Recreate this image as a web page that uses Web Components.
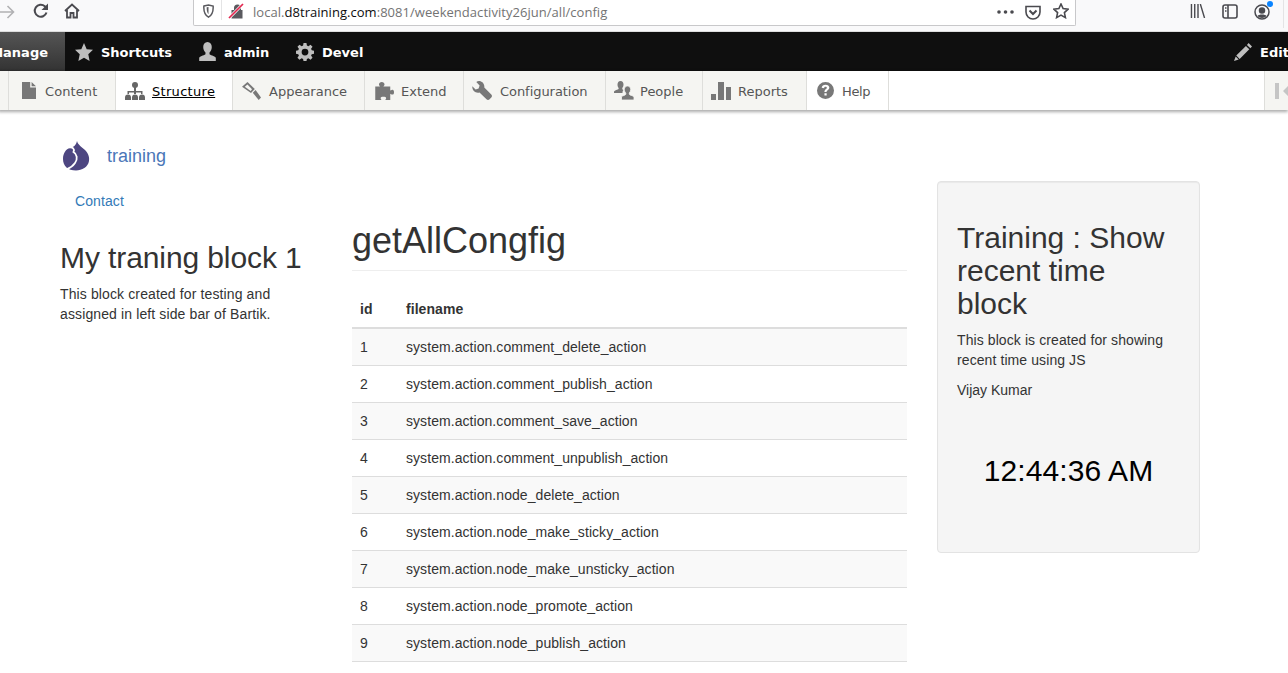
<!DOCTYPE html>
<html>
<head>
<meta charset="utf-8">
<title>getAllCongfig</title>
<style>
  html, body { margin: 0; height: 100%; background: #fff; overflow: hidden; }
  body { font: 14px/20px "Liberation Sans", Arial, sans-serif; color: #333; }
</style>
</head>
<body>
<browser-bar></browser-bar>
<admin-bar>
  <admin-tab icon="star" style="width:123px">Shortcuts</admin-tab>
  <admin-tab icon="user" style="width:98px">admin</admin-tab>
  <admin-tab icon="gear">Devel</admin-tab>
</admin-bar>
<admin-tray>
  <tray-tab icon="content" style="width:107px;--ix:3px;letter-spacing:.1px">Content</tray-tab>
  <tray-tab icon="structure" active style="width:117px;--ix:1px;letter-spacing:.3px">Structure</tray-tab>
  <tray-tab icon="appearance" style="width:132px">Appearance</tray-tab>
  <tray-tab icon="extend" style="width:99px;--ix:1px">Extend</tray-tab>
  <tray-tab icon="config" style="width:142px;letter-spacing:-.05px">Configuration</tray-tab>
  <tray-tab icon="people" style="width:97px;--tx:34px;--ix:2px">People</tray-tab>
  <tray-tab icon="reports" style="width:104px;--tx:35px;--ix:1px">Reports</tray-tab>
  <tray-tab icon="help" plain style="width:82px;--tx:35px;--ix:1px;letter-spacing:-.4px">Help</tray-tab>
</admin-tray>
<site-page>
  <site-header slot="header" name="training"></site-header>
  <side-nav slot="left">Contact</side-nav>
  <text-block slot="left" heading="My traning block 1">
    <p>This block created for testing and assigned in left side bar of Bartik.</p>
  </text-block>
  <config-table slot="main" heading="getAllCongfig"></config-table>
  <time-well slot="right" heading="Training : Show recent time block" time="12:44:36 AM">
    <p>This block is created for showing recent time using JS</p>
    <p style="letter-spacing:0">Vijay Kumar</p>
  </time-well>
</site-page>

<script>
// Toolbar icons: w/h are the drawn size, vb only where it differs from w/h
const ICONS = {
  star: { w: 18, h: 18, vb: '0 0 16 16', body: '<path d="M8 0l2.400 5.500 5.600.6-4.200 3.900 1.200 6L8 13l-5 3 1.200-6L0 6.100l5.600-.6z"/>' },
  user: { w: 19, h: 19, vb: '0 0 16 16', body: '<path d="M8 0c2.300 0 3.600 1.800 3.600 4.200 0 2-.9 3.700-1.900 4.600v1.400c0 1 4.300 1.500 5.300 3V16H1v-2.800c1-1.500 5.300-2 5.300-3V8.800C5.300 7.900 4.400 6.200 4.400 4.200 4.400 1.800 5.700 0 8 0z"/>' },
  gear: { w: 18, h: 18, vb: '0 0 16 16', body: '<path fill-rule="evenodd" d="M6.700 0h2.600l.4 2.200 1.300.6L12.900 1.500l1.800 1.800-1.300 1.900.6 1.300 2 .4v2.600l-2 .4-.6 1.300 1.300 1.900-1.800 1.800-1.900-1.300-1.300.6-.4 2H6.700l-.4-2-1.300-.6-1.900 1.300-1.800-1.800 1.300-1.900-.6-1.300-2-.4V6.900l2-.4.6-1.300-1.300-1.900 1.800-1.800 1.900 1.300 1.300-.6zM8 5a3 3 0 100 6 3 3 0 000-6z"/>' },
  pencil: { w: 18, h: 18, vb: '0 0 16 16', body: '<path d="M13 0l3 3-1.500 1.700-3-3zM10.600 2.600l3 3L5 14.200l-3-3zM1.500 12l2.700 2.700L0 16z"/>' },
  content: { w: 14, h: 17, body: '<path d="M0 0h8.200v5.600H14V17H0zM9.600 0L14 4.200H9.600z"/>' },
  structure: { w: 20, h: 18, body: '<circle cx="10" cy="3" r="3"/><path d="M9 3h2v6h6.500v3h-1.500v-1.500H11V12H9v-1.500H4V12H2.500V9H9z"/><path d="M0 18v-2.500a3 3 0 0 1 6 0V18zM7 18v-2.500a3 3 0 0 1 6 0V18zM14 18v-2.500a3 3 0 0 1 6 0V18z"/>' },
  appearance: { w: 19, h: 18, body: '<path d="M5.500 0L12.800 7 9 11 0 4.700z"/><path fill="#f5f5f2" d="M5.400 2.600L2.800 4.800 8.700 8.900l1.300-1.700z"/><path d="M10.800 10.800l2.800-2.800 5.400 7.500-2.300 2.500z"/>' },
  extend: { w: 20, h: 18, vb: '0 0 16 16', body: '<path d="M1 4h3.800c-.8-1-.8-1.600-.8-2 0-1 .9-2 2.200-2s2.200 1 2.200 2c0 .5-.1 1-.9 2H13v3.500c1-.6 1.400-.7 1.800-.7.8 0 1.200.9 1.200 2.200s-.4 2.200-1.200 2.200c-.4 0-.8-.2-1.800-.8V16H9c.6-1 .7-1.400.7-1.800 0-.8-.9-1.200-2.200-1.200s-2.200.4-2.200 1.200c0 .4.100.8.700 1.800H1z"/>' },
  config: { w: 20, h: 19, body: '<path d="M7 0C10 0 12.800 2.800 12.300 6.500L19.300 13.500C20.200 14.500 20.200 15.700 19.300 16.600L17.600 18.300C16.600 19.200 15.400 19.200 14.500 18.300L7.500 11.500C3.500 12.500 0 9.500 .3 5.200L3.600 8.400 6.600 7.600 7.600 4.400 4.300 1C5 .4 6 0 7 0z"/>' },
  people: { w: 20, h: 19, body: '<path d="M6.500 0C8.500 0 9.500 1.600 9.500 3.600 9.500 5 9 6.300 8.300 7V8.300L9.500 9C8.500 10 8.500 11.200 8.500 12H0V10.500C.5 9.200 4 8.800 4.600 8V7C3.900 6.300 3.500 5 3.500 3.600 3.500 1.600 4.500 0 6.500 0z"/><path stroke="#f5f5f2" stroke-width=".8" d="M13.500 5C15.500 5 16.700 6.500 16.700 8.500 16.700 10 16 11.300 15.300 12V13.200C15.300 14.200 19.200 14.500 20 16V19H7.500V16C8.300 14.500 11.800 14.200 11.800 13.200V12C11 11.300 10.300 10 10.300 8.500 10.300 6.500 11.500 5 13.500 5z"/>' },
  reports: { w: 20, h: 18, body: '<path d="M0 12h5v6H0zM7 0h6v18H7zM15 5h5v13h-5z"/>' },
  help: { w: 17, h: 17, vb: '0 0 16 16', body: '<path fill-rule="evenodd" d="M8 0a8 8 0 110 16A8 8 0 018 0zM8 2.500C6 2.500 4.600 3.500 4.400 5.500l2.300.3C6.800 5 7.200 4.500 8 4.500s1.300.4 1.300 1c0 1.200-2.300 1.500-2.300 4h2c0-1.500 2.600-2 2.600-4.300 0-1.700-1.500-2.700-3.600-2.700zM7 10.500v2.300h2.100v-2.300z"/>' }
};

function svgIcon(name, color) {
  const i = ICONS[name];
  return `<svg width="${i.w}" height="${i.h}" viewBox="${i.vb || `0 0 ${i.w} ${i.h}`}" preserveAspectRatio="none" fill="${color}">${i.body}</svg>`;
}

class BrowserBar extends HTMLElement {
  constructor() {
    super();
    const shadow = this.attachShadow({ mode: 'open' });
    shadow.innerHTML = `
      <style>
        :host { display: flex; height: 32px; background: #f9f9fa; box-sizing: border-box; border-bottom: 1px solid #ddd; }
        svg { display: block; flex: none; }
        .nav { display: flex; align-items: flex-start; width: 193px; flex: none; }
        .back { margin: 4px 0 0 -1px; }
        .reload { margin: 3px 0 0 18px; }
        .home { margin: 3px 0 0 15px; }
        .url {
          flex: none; width: 883px; height: 26px; box-sizing: border-box; background: #fff;
          border: 1px solid #c8c8ca; border-top: 0; border-radius: 0 0 2px 2px;
          display: flex; align-items: flex-start; padding-left: 8px;
        }
        .shield { margin-top: 4px; }
        .sep { width: 1px; height: 20px; background: #e4e4e5; margin: 0 0 0 6px; flex: none; }
        .lock { margin: 3px 0 0 6px; }
        .text {
          font: 13px/16px "Open Sans", "Noto Sans", sans-serif; color: #737373; margin: 4px 0 0 8px; white-space: nowrap;
          flex: 1; letter-spacing: .04px;
        }
        .text b { font-weight: 400; color: #0c0c0d; }
        .acts { display: flex; align-items: flex-start; padding-right: 6px; }
        .tools { display: flex; align-items: flex-start; flex: 1; }
        .edge { width: 1px; height: 28px; background: #e4e4e5; margin-left: 10px; flex: none; }
      </style>
      <div class="nav">
        <svg class="back" width="16" height="16" viewBox="0 0 16 16" fill="none" stroke="#b1b1b3" stroke-width="1.600"><path d="M0 8h14.500M8.500 2l6 6-6 6"/></svg>
        <svg class="reload" width="16" height="16" viewBox="0 0 16 16" fill="none" stroke="#4a4a4f" stroke-width="2"><path d="M13.500 9.500A6 6 0 1 1 11.800 3.300L14 5.500"/><path fill="#4a4a4f" stroke="none" d="M15 0.500V7H8.500z"/></svg>
        <svg class="home" width="16" height="16" viewBox="0 0 16 16" fill="none" stroke="#4a4a4f" stroke-width="1.800"><path d="M1 8L8 1.500 15 8M3 7v7.500h3.500V10h3v4.500H13V7"/></svg>
      </div>
      <div class="url">
        <svg class="shield" width="13" height="14" viewBox="0 0 14 15" fill="none" stroke="#5a5a5f" stroke-width="1.600"><path d="M2 2.200L7 1l5 1.200c.3 5 -.8 9.500 -5 12C2.800 11.700 1.700 7.200 2 2.200z"/><path fill="#5a5a5f" stroke="none" d="M5 3.500l2-.4V11C5.500 9.500 5 7 5 3.500z"/></svg>
        <span class="sep"></span>
        <svg class="lock" width="17" height="16" viewBox="0 0 17 16"><path fill="#5a5a5f" d="M6 7V5a3.500 3.500 0 0 1 7 0V7h1.500v8.500H3.500V7z"/><path stroke="#fff" stroke-width="3" d="M1 15L15 1"/><path stroke="#e22850" stroke-width="1.700" d="M1 15L15 1"/></svg>
        <span class="text">local.<b>d8training.com</b>:8081/weekendactivity26jun/all/config</span>
        <div class="acts">
          <svg style="margin:10px 11px 0 0" width="17" height="4" viewBox="0 0 17 4" fill="#4a4a4f"><circle cx="2" cy="2" r="1.800"/><circle cx="8.500" cy="2" r="1.800"/><circle cx="15" cy="2" r="1.800"/></svg>
          <svg style="margin:4px 12px 0 0" width="16" height="16" viewBox="0 0 16 16" fill="none" stroke="#4a4a4f" stroke-width="1.600"><path d="M1 2.500h14v5.500a7 7 0 0 1-14 0z"/><path d="M4.500 6.500L8 10l3.500-3.500" stroke-width="2"/></svg>
          <svg style="margin:3px 0 0 0" width="16" height="16" viewBox="0 0 16 16" fill="none" stroke="#4a4a4f" stroke-width="1.600"><path d="M8 1l2.100 4.600 5 .6-3.700 3.400 1 5L8 12.100l-4.400 2.500 1-5L.9 6.200l5-.6z"/></svg>
        </div>
      </div>
      <div class="tools">
        <svg style="margin:4px 0 0 114px" width="16" height="14" viewBox="0 0 16 15" fill="none" stroke="#4a4a4f" stroke-width="1.500"><path d="M1 0v15M4.500 0v15M8 0v15M10.500 0l4.500 15"/></svg>
        <svg style="margin:4px 0 0 16px" width="16" height="15" viewBox="0 0 16 15" fill="none" stroke="#4a4a4f" stroke-width="1.600"><rect x="1" y="1" width="14" height="13" rx="2"/><path d="M6 1v13M3 4h1.500M3 7h1.500"/></svg>
        <svg style="margin:4px 0 0 16px" width="16" height="16" viewBox="0 0 16 16" fill="none" stroke="#4a4a4f" stroke-width="1.500"><circle cx="8" cy="8" r="7"/><circle cx="8" cy="6.500" r="2.500" fill="#4a4a4f"/><path fill="#4a4a4f" stroke="none" d="M3.500 12c1-2 8-2 9 0-2 2.500-7 2.500-9 0z"/></svg>
        <span style="width:6px;height:6px;border-radius:50%;background:#0a84ff;margin:1px 0 0 -3px;flex:none"></span>
        <span class="edge"></span>
      </div>`;
  }
}

class AdminBar extends HTMLElement {
  constructor() {
    super();
    const shadow = this.attachShadow({ mode: 'open' });
    shadow.innerHTML = `
      <style>
        :host { display: flex; height: 39px; background: #0f0f0f; overflow: hidden; }
        .manage {
          flex: none; width: 65px; box-sizing: border-box; display: flex; align-items: center; justify-content: flex-end;
          padding: 2px 17px 0 0; overflow: hidden;
          background: linear-gradient(to bottom, #555, #333);
          color: #fff; font: bold 13px/37px "DejaVu Sans", Verdana, sans-serif; white-space: nowrap;
        }
        .spacer { flex: 1; }
      </style>
      <div class="manage">Manage</div>
      <slot></slot>
      <div class="spacer"></div>
      <admin-tab icon="pencil" style="flex:none;width:64px">Edit</admin-tab>`;
  }
}

class AdminTab extends HTMLElement {
  constructor() {
    super();
    const shadow = this.attachShadow({ mode: 'open' });
    shadow.innerHTML = `
      <style>
        :host { display: flex; align-items: center; flex: none; box-sizing: border-box; padding-left: 10px; color: #fff; font: bold 13px/37px "DejaVu Sans", Verdana, sans-serif; white-space: nowrap; }
        .ico { width: 26px; flex: none; display: flex; }
        .t { padding-top: 2px; }
        svg { display: block; flex: none; }
      </style>
      <span class="ico">${svgIcon(this.getAttribute('icon'), '#bebebe')}</span><span class="t"><slot></slot></span>`;
  }
}

class AdminTray extends HTMLElement {
  constructor() {
    super();
    const shadow = this.attachShadow({ mode: 'open' });
    shadow.innerHTML = `
      <style>
        :host { display: flex; height: 39px; background: #fff; box-shadow: -1px 1px 3px 1px rgba(0,0,0,.33); position: relative; }
        .lead { width: 9px; flex: none; box-sizing: border-box; background: #f5f5f2; border-right: 1px solid #dededb; }
        .spacer { flex: 1; }
        .toggle { width: 24px; flex: none; box-sizing: border-box; background: #f5f5f2; border-left: 1px solid #dededb; display: flex; align-items: center; padding-left: 10px; overflow: hidden; }
        .toggle svg { flex: none; display: block; }
      </style>
      <div class="lead"></div>
      <slot></slot>
      <div class="spacer"></div>
      <div class="toggle">
        <svg width="18" height="16" viewBox="0 0 18 16" fill="#c5c5c5"><path d="M0 0h4v16H0zM8 8l7-7v14z"/></svg>
      </div>`;
  }
}

class TrayTab extends HTMLElement {
  constructor() {
    super();
    const shadow = this.attachShadow({ mode: 'open' });
    const active = this.hasAttribute('active');
    shadow.innerHTML = `
      <style>
        :host { display: flex; align-items: center; flex: none; box-sizing: border-box; height: 39px; border-right: 1px solid #dededb; background: #f5f5f2; color: #565656; font: 13px/37px "DejaVu Sans", Verdana, sans-serif; white-space: nowrap; }
        :host([active]) { background: #fff; color: #000; }
        :host([active]) .t { text-decoration: underline; }
        :host([plain]) { background: #fff; }
        .ico { width: var(--tx, 36px); flex: none; display: flex; justify-content: center; box-sizing: border-box; padding-left: var(--ix, 0); }
        .t { padding-top: 2px; }
        svg { display: block; flex: none; }
      </style>
      <span class="ico">${svgIcon(this.getAttribute('icon'), active ? '#666' : '#787878')}</span><span class="t"><slot></slot></span>`;
  }
}

class SitePage extends HTMLElement {
  constructor() {
    super();
    const shadow = this.attachShadow({ mode: 'open' });
    shadow.innerHTML = `
      <style>
        :host { display: block; width: 1170px; margin-left: 45px; padding-top: 31px; }
        .cols { display: grid; grid-template-columns: 292px 585px 293px; }
        .cols > div { padding: 0 15px; box-sizing: border-box; }
      </style>
      <slot name="header"></slot>
      <div class="cols">
        <div><slot name="left"></slot></div>
        <div><slot name="main"></slot></div>
        <div><slot name="right"></slot></div>
      </div>`;
  }
}

class SiteHeader extends HTMLElement {
  constructor() {
    super();
    const shadow = this.attachShadow({ mode: 'open' });
    shadow.innerHTML = `
      <style>
        :host { display: flex; align-items: center; height: 30px; margin: 0 0 10px 17px; }
        svg { display: block; flex: none; }
        a { font-size: 18px; line-height: 20px; color: #4a76b8; text-decoration: none; margin-left: 17px; }
      </style>
      <svg width="28" height="30" viewBox="0 0 28 30">
        <path fill="#4d4681" d="M15 0C16 4 20 6 23 9 27 13 27.500 17 27 20 26 26 20 29.500 14 29.500 6 29.500 1 25 1 18 1 12 4 8 8 7 12 6 14 4 15 0z"/>
        <path fill="none" stroke="#fff" stroke-width="1.800" d="M7.500 6.500C10.500 6 13 8 11.500 11 15 13 16 18 13 22 11 25 8 27 5 28"/>
      </svg>
      <a href="#">${this.getAttribute('name')}</a>`;
  }
}

class SideNav extends HTMLElement {
  constructor() {
    super();
    const shadow = this.attachShadow({ mode: 'open' });
    shadow.innerHTML = `
      <style>
        :host { display: block; padding: 10px 15px; color: #337ab7; letter-spacing: .1px; }
      </style>
      <slot></slot>`;
  }
}

class TextBlock extends HTMLElement {
  constructor() {
    super();
    const shadow = this.attachShadow({ mode: 'open' });
    shadow.innerHTML = `
      <style>
        :host { display: block; }
        h2 { font-size: 30px; font-weight: 500; line-height: 33px; margin: 20px 0 10px; color: #333; letter-spacing: -.1px; }
        ::slotted(p) { margin: 0 0 10px; letter-spacing: .12px; }
      </style>
      <h2>${this.getAttribute('heading')}</h2>
      <slot></slot>`;
  }
}

class ConfigTable extends HTMLElement {
  constructor() {
    super();
    const shadow = this.attachShadow({ mode: 'open' });
    const files = [
      'comment_delete_action', 'comment_publish_action', 'comment_save_action',
      'comment_unpublish_action', 'node_delete_action', 'node_make_sticky_action',
      'node_make_unsticky_action', 'node_promote_action', 'node_publish_action'
    ];
    const rows = files.map((f, i) => `<tr><td>${i + 1}</td><td>system.action.${f}</td></tr>`).join('');
    shadow.innerHTML = `
      <style>
        :host { display: block; }
        h1 { font-size: 36px; font-weight: 500; line-height: 39.6px; margin: 40px 0 20px; padding-bottom: 9px; border-bottom: 1px solid #eee; color: #333; }
        table { width: 100%; border-collapse: collapse; border-spacing: 0; }
        th, td { padding: 8px; text-align: left; line-height: 20px; letter-spacing: .06px; }
        th { font-weight: bold; border-bottom: 2px solid #ddd; }
        td { border-bottom: 1px solid #ddd; }
        th:first-child, td:first-child { width: 30px; }
        tbody tr:nth-child(odd) { background: #f9f9f9; }
      </style>
      <h1>${this.getAttribute('heading')}</h1>
      <table>
        <thead><tr><th>id</th><th>filename</th></tr></thead>
        <tbody>${rows}</tbody>
      </table>`;
  }
}

class TimeWell extends HTMLElement {
  constructor() {
    super();
    const shadow = this.attachShadow({ mode: 'open' });
    shadow.innerHTML = `
      <style>
        :host { display: block; box-sizing: border-box; padding: 19px; background: #f5f5f5; border: 1px solid #e3e3e3; border-radius: 4px; box-shadow: inset 0 1px 1px rgba(0,0,0,.05); }
        h2 { font-size: 30px; font-weight: 500; line-height: 33px; margin: 20px 0 10px; color: #333; }
        ::slotted(p) { margin: 0 0 10px; letter-spacing: .09px; }
        .clock { font-size: 30px; line-height: 33px; padding: 44px 0 46px; text-align: center; color: #000; letter-spacing: .1px; }
      </style>
      <h2>${this.getAttribute('heading')}</h2>
      <slot></slot>
      <div class="clock">${this.getAttribute('time')}</div>`;
  }
}

customElements.define('browser-bar', BrowserBar);
customElements.define('admin-tab', AdminTab);
customElements.define('admin-bar', AdminBar);
customElements.define('admin-tray', AdminTray);
customElements.define('tray-tab', TrayTab);
customElements.define('site-page', SitePage);
customElements.define('site-header', SiteHeader);
customElements.define('side-nav', SideNav);
customElements.define('text-block', TextBlock);
customElements.define('config-table', ConfigTable);
customElements.define('time-well', TimeWell);
</script>
</body>
</html>
